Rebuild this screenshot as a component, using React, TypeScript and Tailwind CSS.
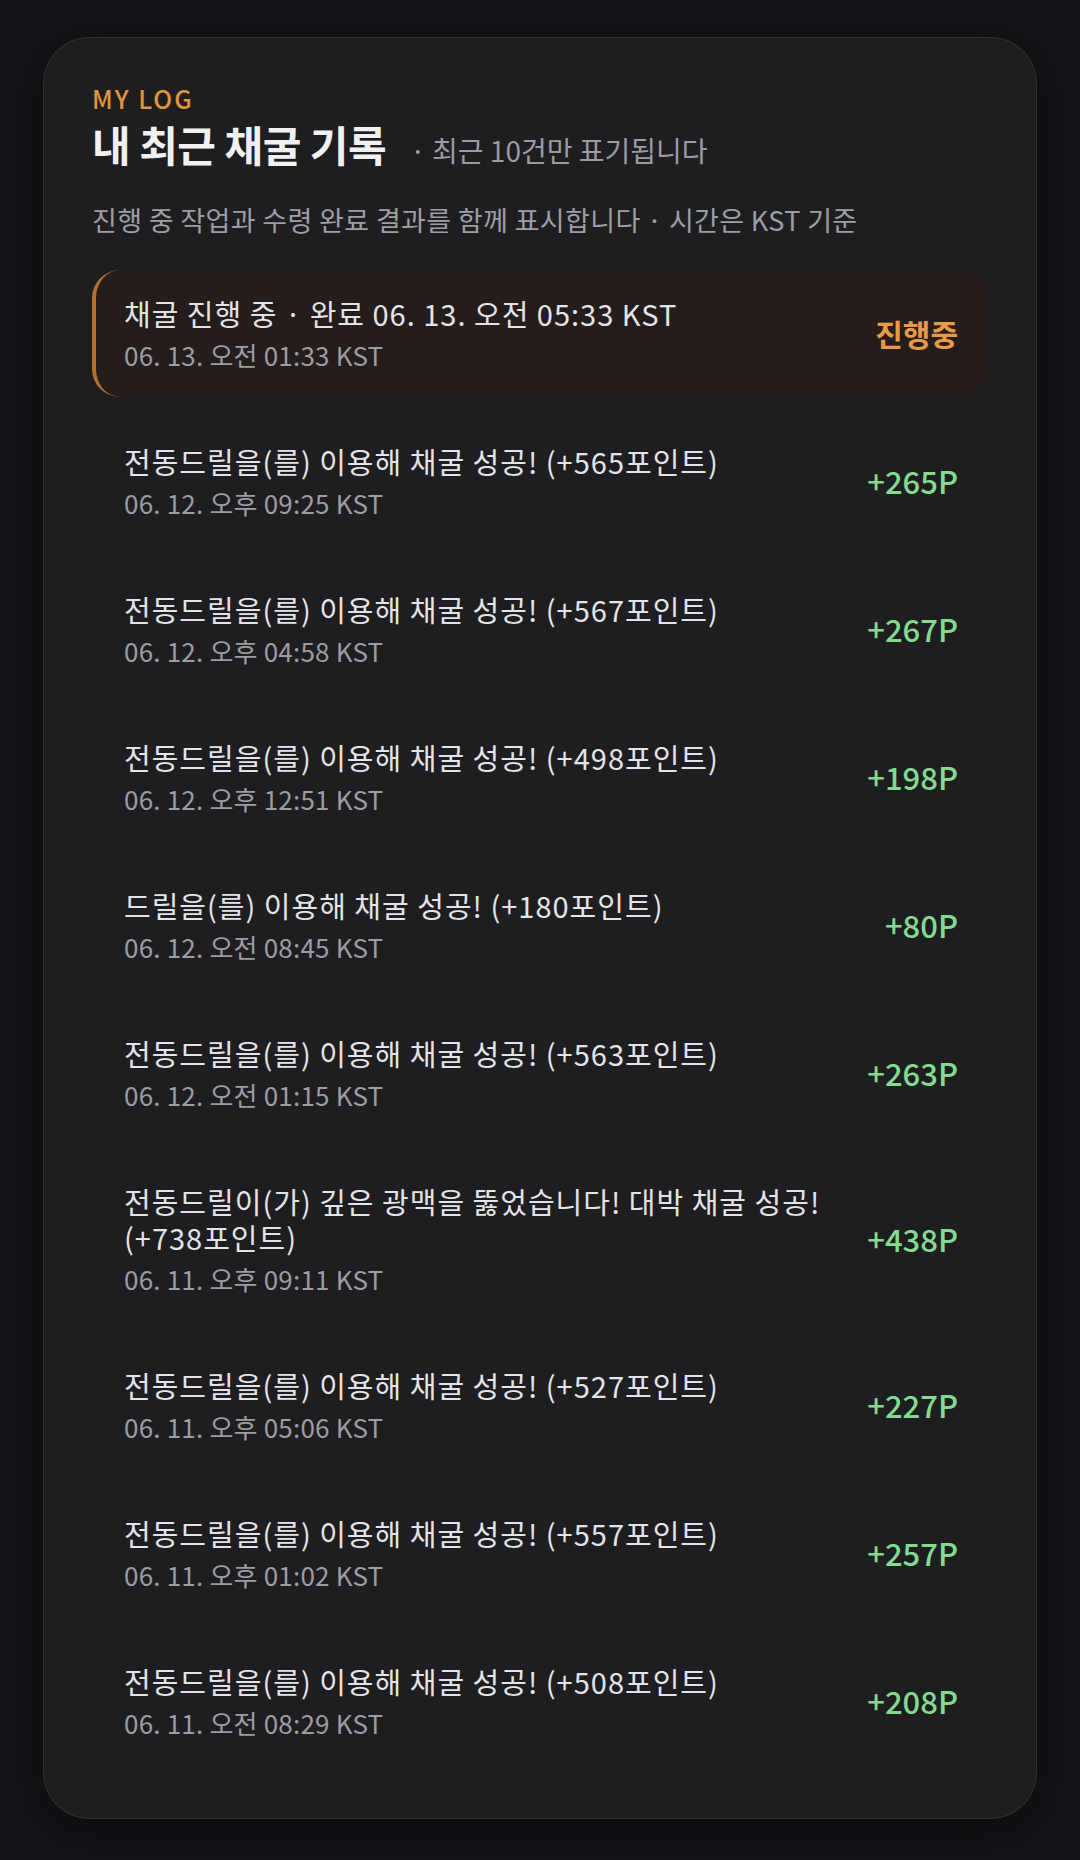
const FONT = "font-['Noto_Sans_CJK_KR','Noto_Sans',sans-serif]";

type LogItem = {
  title: string;
  time: string;
  amount?: string;
  pending?: boolean;
};

const logs: LogItem[] = [
  { title: "채굴 진행 중 · 완료 06. 13. 오전 05:33 KST", time: "06. 13. 오전 01:33 KST", pending: true },
  { title: "전동드릴을(를) 이용해 채굴 성공! (+565포인트)", time: "06. 12. 오후 09:25 KST", amount: "+265P" },
  { title: "전동드릴을(를) 이용해 채굴 성공! (+567포인트)", time: "06. 12. 오후 04:58 KST", amount: "+267P" },
  { title: "전동드릴을(를) 이용해 채굴 성공! (+498포인트)", time: "06. 12. 오후 12:51 KST", amount: "+198P" },
  { title: "드릴을(를) 이용해 채굴 성공! (+180포인트)", time: "06. 12. 오전 08:45 KST", amount: "+80P" },
  { title: "전동드릴을(를) 이용해 채굴 성공! (+563포인트)", time: "06. 12. 오전 01:15 KST", amount: "+263P" },
  { title: "전동드릴이(가) 깊은 광맥을 뚫었습니다! 대박 채굴 성공! (+738포인트)", time: "06. 11. 오후 09:11 KST", amount: "+438P" },
  { title: "전동드릴을(를) 이용해 채굴 성공! (+527포인트)", time: "06. 11. 오후 05:06 KST", amount: "+227P" },
  { title: "전동드릴을(를) 이용해 채굴 성공! (+557포인트)", time: "06. 11. 오후 01:02 KST", amount: "+257P" },
  { title: "전동드릴을(를) 이용해 채굴 성공! (+508포인트)", time: "06. 11. 오전 08:29 KST", amount: "+208P" },
];

function LogRow({ item }: { item: LogItem }) {
  return (
    <li
      className={
        item.pending
          ? "flex items-center justify-between gap-10 rounded-[28px] border-l-4 border-[#b5702f] bg-[#241d1c] pb-[26px] pt-[25px] pl-[28px] pr-[30px]"
          : "flex items-center justify-between gap-10 rounded-[28px] py-[26px] pl-[32px] pr-[30px]"
      }
    >
      <div className="min-w-0 flex-1">
        <p className="text-[29px] leading-[36px] tracking-[1px] text-[#e3e4e9]">{item.title}</p>
        <p className="mt-[8px] text-[26px] leading-[32px] tracking-[0.2px] text-[#9b9ca4]">{item.time}</p>
      </div>
      {item.pending ? (
        <span className="shrink-0 text-[30px] font-semibold text-[#e89a48]">진행중</span>
      ) : (
        <span className="shrink-0 text-[31px] font-medium text-[#84da91]">{item.amount}</span>
      )}
    </li>
  );
}

export default function App() {
  return (
    <div className={`${FONT} min-h-[1860px] bg-[#131417] px-[43px] py-[37px]`}>
      <section className="rounded-[46px] border border-[#3a2e25] bg-[#1e1e20] px-[48px] pb-[53px] pt-[46px] shadow-[0_10px_40px_rgba(0,0,0,0.45)]">
        <p className="text-[25px] font-medium leading-[28px] tracking-[2px] text-[#e0953f]">MY LOG</p>
        <div className="mt-[4px] flex items-baseline">
          <h2 className="text-[42px] font-bold leading-[56px] tracking-[-0.5px] text-[#f1f1f4]">내 최근 채굴 기록</h2>
          <span className="ml-[24px] text-[28px] text-[#9a9ba3]">· 최근 10건만 표기됩니다</span>
        </div>
        <p className="mt-[31px] text-[27px] leading-[34px] tracking-[0.35px] text-[#9c9ea6]">
          진행 중 작업과 수령 완료 결과를 함께 표시합니다 · 시간은 KST 기준
        </p>
        <ul className="mt-[33px] flex flex-col gap-[20px]">
          {logs.map((item, i) => (
            <LogRow key={i} item={item} />
          ))}
        </ul>
      </section>
    </div>
  );
}
